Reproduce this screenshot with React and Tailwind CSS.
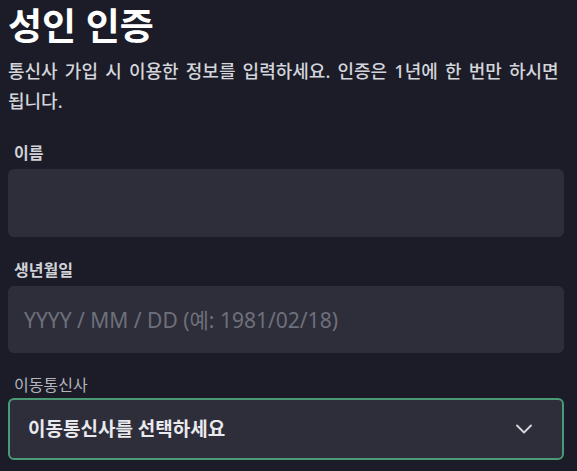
import React from 'react';
import { ChevronDown } from 'lucide-react';

const font = "font-['Noto_Sans','Noto_Sans_CJK_KR',sans-serif]";

const App = () => {
  return (
    <div className={`min-h-[471px] bg-[#1b1c28] pl-2 pr-[13px] pt-[2px] ${font}`}>
      <h1 className="text-[37px] font-semibold leading-[48px] text-white">성인 인증</h1>
      <p className="mt-[6px] break-keep text-[18px] font-medium leading-[30px] text-[#d4d5da] [word-spacing:2.5px]">
        통신사 가입 시 이용한 정보를 입력하세요. 인증은 1년에 한 번만 하시면 됩니다.
      </p>

      {/* 이름 */}
      <label className="mt-[27px] block px-1.5 text-[16px] font-semibold leading-[20px] text-[#d1d2d8]">이름</label>
      <input
        type="text"
        className="mt-[6px] block h-[68px] w-full rounded-md bg-[#2d2e3a] px-4 text-[21px] text-white outline-none"
      />

      {/* 생년월일 */}
      <label className="mt-[23px] block px-1.5 text-[16px] font-semibold leading-[20px] text-[#d1d2d8]">생년월일</label>
      <input
        type="text"
        placeholder="YYYY / MM / DD (예: 1981/02/18)"
        className="mt-[6px] block h-[67px] w-full rounded-md bg-[#2d2e3a] px-4 text-[21px] text-white outline-none placeholder:text-[#6e707b]"
      />

      {/* 이동통신사 */}
      <label className="mt-[22px] block px-1.5 text-[16px] leading-[20px] text-[#b4b5bc]">이동통신사</label>
      <div className="mt-[3px] flex h-[62px] items-center justify-between rounded-md border-2 border-[#4a9a76] bg-[#2d2e3a] pl-[18px] pr-[24px]">
        <span className="text-[19px] font-semibold text-[#e9e9ee]">이동통신사를 선택하세요</span>
        <ChevronDown size={28} strokeWidth={1.6} className="text-[#d6d7dc]" />
      </div>
    </div>
  );
};

export default App;
